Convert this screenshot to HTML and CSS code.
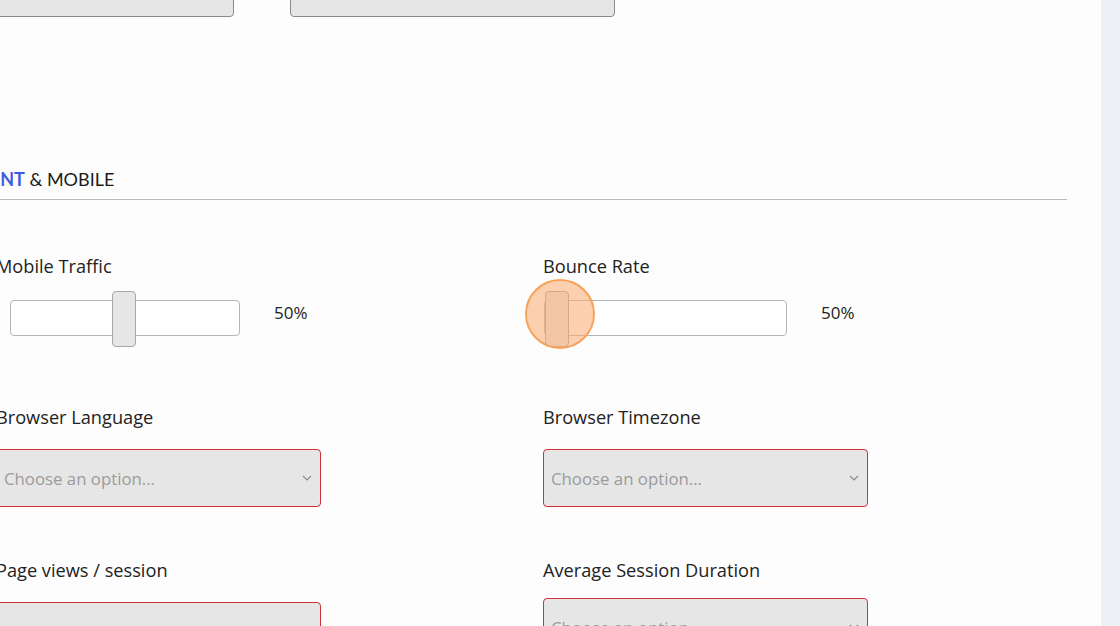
FILE: index.html
```html
<!DOCTYPE html>
<html>
<head>
<meta charset="utf-8">
<link rel="stylesheet" href="styles.css">
</head>
<body>
<div class="page">
  <main class="main">
    <div class="content">
      <div class="top-row">
        <div class="stub stub-a"></div>
        <div class="stub stub-b"></div>
      </div>
      <h2 class="section-title"><span class="accent">CONTENT</span> &amp; MOBILE</h2>
      <div class="grid">
        <div class="field field-slider">
          <label class="label">Mobile Traffic</label>
          <div class="slider">
            <div class="track track-a">
              <div class="thumb thumb-mid"></div>
            </div>
            <span class="value">50%</span>
          </div>
        </div>
        <div class="field field-slider col2">
          <label class="label">Bounce Rate</label>
          <div class="slider">
            <div class="track track-b">
              <div class="thumb thumb-start"></div>
              <div class="focus-ring"></div>
            </div>
            <span class="value">50%</span>
          </div>
        </div>
        <div class="field field-select">
          <label class="label">Browser Language</label>
          <div class="select">
            <span class="placeholder">Choose an option...</span>
            <svg class="chev" width="10" height="6" viewBox="0 0 10 6"><path d="M1 1l4 4 4-4" fill="none" stroke="#8a8a8a" stroke-width="1.2"/></svg>
          </div>
        </div>
        <div class="field field-select col2">
          <label class="label">Browser Timezone</label>
          <div class="select">
            <span class="placeholder">Choose an option...</span>
            <svg class="chev" width="10" height="6" viewBox="0 0 10 6"><path d="M1 1l4 4 4-4" fill="none" stroke="#8a8a8a" stroke-width="1.2"/></svg>
          </div>
        </div>
        <div class="field field-select">
          <label class="label">Page views / session</label>
          <div class="select">
            <span class="placeholder">Choose an option...</span>
            <svg class="chev" width="10" height="6" viewBox="0 0 10 6"><path d="M1 1l4 4 4-4" fill="none" stroke="#8a8a8a" stroke-width="1.2"/></svg>
          </div>
        </div>
        <div class="field field-select col2">
          <label class="label">Average Session Duration</label>
          <div class="select select-up">
            <span class="placeholder">Choose an option...</span>
            <svg class="chev" width="10" height="6" viewBox="0 0 10 6"><path d="M1 1l4 4 4-4" fill="none" stroke="#8a8a8a" stroke-width="1.2"/></svg>
          </div>
        </div>
      </div>
    </div>
  </main>
  <div class="scrollbar"></div>
</div>
</body>
</html>
```

FILE: styles.css
```css
html, body {
  margin: 0;
  padding: 0;
}
body {
  font-family: "Open Sans", Lato, sans-serif;
  color: #222;
  background: #fdfdfd;
}
.page {
  display: flex;
  width: 1120px;
  height: 626px;
  overflow: hidden;
}
.main {
  width: 1101px;
  flex: none;
  background: #fdfdfd;
  overflow: hidden;
}
.scrollbar {
  flex: 1;
  background: #edf0f4;
}
.content {
  margin-left: -4px;
  width: 1071px;
}
.top-row {
  display: flex;
  gap: 56px;
  margin-top: -23px;
  margin-left: -40px;
}
.stub {
  height: 38px;
  background: #e6e6e6;
  border: 1px solid #8a8a8a;
  border-radius: 4px;
}
.stub-a {
  width: 276px;
}
.stub-b {
  width: 323px;
}
.section-title {
  margin: 151px 0 0 4px;
  padding: 0 0 9px 0;
  font-family: Lato, sans-serif;
  font-size: 18px;
  line-height: 22px;
  font-weight: 400;
  border-bottom: 1px solid #b9b9b9;
  text-indent: -61px;
  color: #1c1c1c;
}
.accent {
  color: #3d5ce0;
  font-weight: 700;
}
.grid {
  display: grid;
  grid-template-columns: 547px 1fr;
  margin-top: 55px;
}
.field {
  display: flex;
  flex-direction: column;
}
.label {
  font-size: 18.2px;
  line-height: 22px;
  color: #222;
}
.field-slider {
  margin-bottom: 60px;
}
.field-select {
  margin-bottom: 52px;
}
.slider {
  display: flex;
  align-items: center;
  height: 56px;
  margin-top: 13px;
}
.track {
  position: relative;
  height: 34px;
  background: #fff;
  border: 1px solid #b5b5b5;
  border-radius: 4px;
}
.track-a {
  width: 228px;
  margin-left: 14px;
}
.track-b {
  width: 241px;
  margin-left: 1px;
}
.thumb {
  position: absolute;
  top: -10px;
  width: 22px;
  height: 54px;
  background: #e6e6e6;
  border: 1px solid #a8a8a8;
  border-radius: 4px;
}
.thumb-mid {
  left: 101px;
}
.thumb-start {
  left: 0px;
}
.focus-ring {
  position: absolute;
  left: -20px;
  top: -22px;
  width: 66px;
  height: 66px;
  border-radius: 50%;
  border: 2px solid #f8a35c;
  background: rgba(252, 170, 110, 0.55);
}
.value {
  margin-left: 34px;
  margin-bottom: 12px;
  font-size: 17px;
  color: #222;
}
.select {
  margin-top: 21px;
  background: #e6e6e6;
  border: 1px solid #d2303c;
  border-radius: 4px;
  display: flex;
  align-items: center;
  justify-content: space-between;
  padding: 0 8px 0 7px;
  box-sizing: border-box;
  width: 325px;
  height: 58px;
}
.select-up {
  margin-top: 17px;
}
.placeholder {
  font-size: 16.8px;
  color: #9b9b9b;
}
.chev {
  display: block;
}
```
